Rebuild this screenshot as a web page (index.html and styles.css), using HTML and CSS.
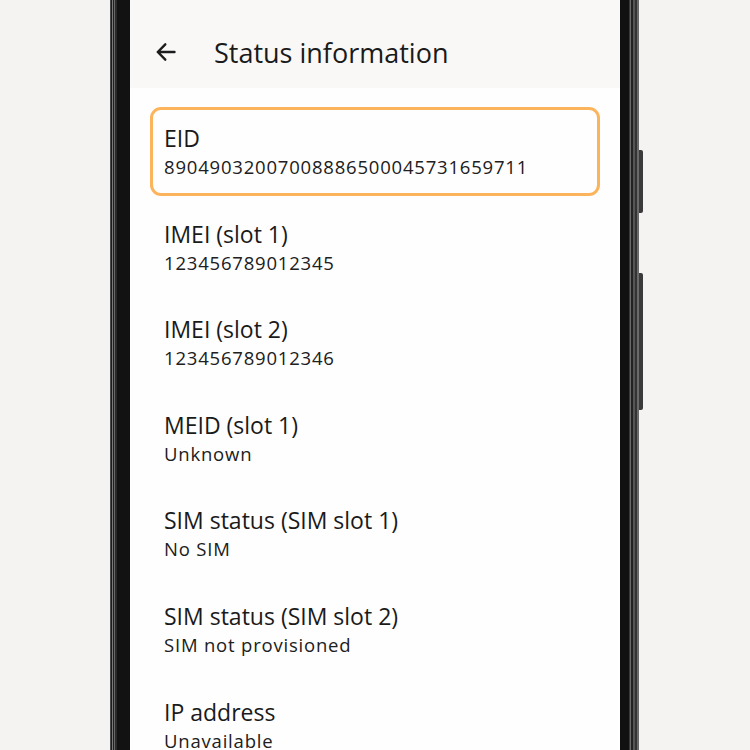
FILE: index.html
```html
<!DOCTYPE html>
<html lang="en">
<head>
<meta charset="utf-8">
<title>Status information</title>
<link rel="stylesheet" href="styles.css">
</head>
<body>
<div class="stage">
  <div class="phone">
    <div class="screen">
      <header class="appbar">
        <svg class="back" width="24" height="24" viewBox="0 0 24 24" aria-hidden="true">
          <path d="M20.5 12H3.8M11.3 4.3L3.8 12l7.5 7.7" fill="none" stroke="#1c1c1c" stroke-width="2.4" stroke-linecap="round" stroke-linejoin="round"/>
        </svg>
        <h1 class="title">Status information</h1>
      </header>
      <ul class="list">
        <li class="item selected"><div class="label">EID</div><div class="value">89049032007008886500045731659711</div></li>
        <li class="item"><div class="label">IMEI (slot 1)</div><div class="value">123456789012345</div></li>
        <li class="item"><div class="label">IMEI (slot 2)</div><div class="value">123456789012346</div></li>
        <li class="item"><div class="label">MEID (slot 1)</div><div class="value">Unknown</div></li>
        <li class="item"><div class="label">SIM status (SIM slot 1)</div><div class="value">No SIM</div></li>
        <li class="item"><div class="label">SIM status (SIM slot 2)</div><div class="value">SIM not provisioned</div></li>
        <li class="item"><div class="label">IP address</div><div class="value">Unavailable</div></li>
      </ul>
    </div>
    <span class="side-btn btn-a"></span>
    <span class="side-btn btn-b"></span>
  </div>
</div>
</body>
</html>
```

FILE: styles.css
```css
html, body {
  margin: 0;
  padding: 0;
  height: 100%;
  overflow: hidden;
}
body {
  background: #f4f3f1;
  font-family: "Open Sans", "Noto Sans", sans-serif;
  color: #1c1c1c;
}
.stage {
  display: flex;
  padding-left: 110px;
  height: 750px;
}
.phone {
  position: relative;
  display: flex;
  width: 529px;
  height: 750px;
  box-sizing: border-box;
  padding-left: 20px;
  padding-right: 19px;
  background:
    linear-gradient(to right,
      #4a4a4a 0, #4a4a4a 1px,
      #1e1e1e 1px, #1e1e1e 2px,
      #7a7a7a 2px, #7a7a7a 3px,
      #202020 3px, #202020 4px,
      #6a6a6a 4px, #6a6a6a 5px,
      #2a2a2a 5px, #2a2a2a 7px,
      #121212 7px, #121212 20px,
      transparent 20px, transparent 510px,
      #111111 510px, #111111 519px,
      #3a3a3a 519px, #3a3a3a 520px,
      #6a6a6a 520px, #6a6a6a 521px,
      #222222 521px, #222222 523px,
      #555555 523px, #555555 525px,
      #333333 525px, #333333 527px,
      #6a6a6a 527px, #6a6a6a 529px);
}
.screen {
  flex: 1;
  display: flex;
  flex-direction: column;
  background: #fefefe;
  overflow: hidden;
}
.appbar {
  display: flex;
  align-items: center;
  height: 88px;
  flex: none;
  box-sizing: border-box;
  padding: 16px 0 0 24px;
  background: #f9f8f6;
}
.back {
  flex: none;
  margin-right: 36px;
}
.title {
  margin: 0;
  font-size: 27px;
  font-weight: 500;
  letter-spacing: 0;
  color: #1a1a1a;
}
.list {
  list-style: none;
  margin: 0;
  padding: 19px 20px 0;
  display: flex;
  flex-direction: column;
  gap: 6.6px;
}
.item {
  height: 89px;
  box-sizing: border-box;
  border: 3px solid transparent;
  border-radius: 11px;
  padding: 13px 11px 0;
}
.item.selected {
  border-color: #fcb45c;
}
.label {
  font-size: 23px;
  line-height: 30px;
  color: #1a1a1a;
}
.value {
  font-size: 18.5px;
  line-height: 27px;
  letter-spacing: 0.8px;
  color: #202020;
}
.side-btn {
  position: absolute;
  right: -4px;
  width: 4px;
  background: #3a3a3a;
  border-radius: 0 2px 2px 0;
}
.btn-a {
  top: 150px;
  height: 63px;
}
.btn-b {
  top: 273px;
  height: 137px;
}
```
